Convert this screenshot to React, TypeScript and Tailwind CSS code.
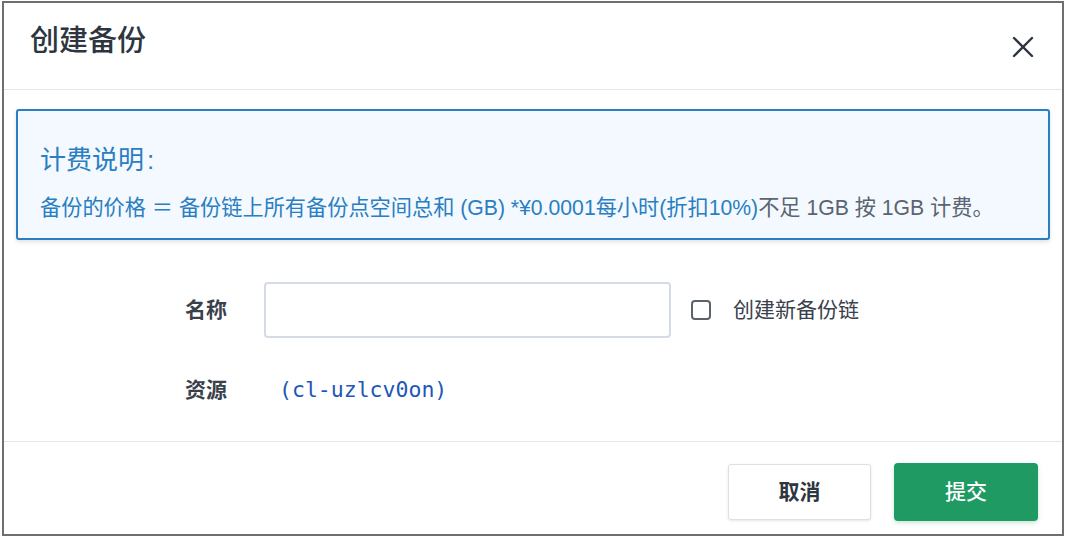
export default function App() {
  const font = { fontFamily: '"Liberation Sans", "Noto Sans CJK SC", sans-serif' };
  return (
    <div className="w-[1066px] h-[538px] bg-white px-[2px] pt-[1px]" style={font}>
      <div className="w-[1062px] h-[535px] border-2 border-[#6f6f6f] bg-white flex flex-col">
        {/* header */}
        <div className="h-[87px] flex items-center justify-between pl-[26px] pr-[28px] border-b border-[#e3e6ea]">
          <h1 className="text-[29px] font-medium text-[#2d3540] leading-none -mt-[10px]">创建备份</h1>
          <button className="text-[#2d3540] mt-[1px]">
            <svg width="22" height="22" viewBox="0 0 22 22" fill="none" stroke="currentColor" strokeWidth="2.4" strokeLinecap="round">
              <path d="M2 2L20 20M20 2L2 20" />
            </svg>
          </button>
        </div>

        {/* body */}
        <div className="flex-1 flex flex-col border-b border-[#e3e6ea]">
          <div className="mx-[12px] mt-[19px] h-[131px] border-2 border-[#2a7ec2] rounded-[3px] bg-[#f3f9fe] shadow-[0_2px_4px_rgba(0,0,0,0.12)] pl-[22px] flex flex-col">
            <div className="text-[26px] text-[#2a7ec2] leading-none mt-[36px]">计费说明<span className="ml-[3px]">:</span></div>
            <div className="text-[21.2px] leading-none mt-[24px] whitespace-nowrap">
              <span className="text-[#2a7ec2]">备份的价格 ＝ 备份链上所有备份点空间总和 (GB) *¥0.0001每小时(折扣10%)</span>
              <span className="text-[#5b6470]">不足 1GB 按 1GB 计费。</span>
            </div>
          </div>

          <div className="flex items-center mt-[42px] pl-[181px]">
            <span className="w-[79px] text-[21px] font-bold text-[#3a414b]">名称</span>
            <input className="w-[407px] h-[56px] border-2 border-[#d5dbe6] rounded-[4px] outline-none bg-white" />
            <label className="flex items-center ml-[20px]">
              <span className="w-[20px] h-[20px] border-2 border-[#5d636b] rounded-[4px] bg-white" />
              <span className="ml-[22px] text-[21px] text-[#3a414b]">创建新备份链</span>
            </label>
          </div>

          <div className="flex items-center mt-[36px] pl-[181px]">
            <span className="w-[94px] text-[21px] font-bold text-[#3a414b]">资源</span>
            <span className="text-[21.5px] text-[#1d58b8]" style={{ fontFamily: '"DejaVu Sans Mono", monospace' }}>(cl-uzlcv0on)</span>
          </div>
        </div>

        {/* footer */}
        <div className="h-[92px] flex items-start justify-end gap-[23px] pr-[24px] pt-[22px]">
          <button className="w-[143px] h-[56px] border border-[#dcdfe6] rounded-[3px] bg-white shadow-[0_1px_3px_rgba(0,0,0,0.1)] text-[21px] font-bold text-[#2d3540]">取消</button>
          <button className="w-[144px] h-[58px] -mt-[1px] rounded-[4px] bg-[#1e9a62] shadow-[0_2px_4px_rgba(30,154,98,0.25)] text-[21px] font-medium text-white">提交</button>
        </div>
      </div>
    </div>
  );
}
